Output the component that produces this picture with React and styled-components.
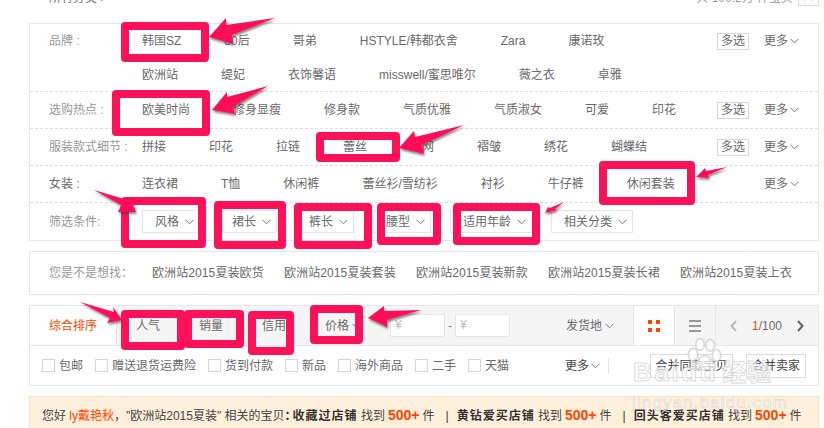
import React from 'react';
import styled, { createGlobalStyle } from 'styled-components';

const Global = createGlobalStyle`
  html, body { margin: 0; padding: 0; background: #fff; }
  body { width: 824px; height: 428px; overflow: hidden; font: 12px/16px "Liberation Sans", "Noto Sans CJK SC", sans-serif; color: #6a6a6a; }
  * { box-sizing: border-box; }
`;

const Page = styled.div`position: relative; width: 824px; height: 428px; overflow: hidden; padding-left: 29px;`;
const TopBar = styled.div`display: flex; justify-content: space-between; align-items: flex-start; width: 790px; height: 23px; color: #777;`;
const Crumb = styled.span`margin: -10px 0 0 20px;`;
const TopRight = styled.div`display: flex; gap: 5px; margin-top: -10px; color: #999;`;
const PageBox = styled.span`width: 21px; height: 16px; border: 1px solid #ddd; text-align: center; color: #666;`;

const Panel = styled.section`width: 790px; border: 1px solid #e6e6e6;`;
const Row = styled.div`display: flex; align-items: ${p => p.$tall ? 'flex-start' : 'center'}; height: ${p => p.$h}px; padding: 0 21px 0 19px; border-bottom: ${p => p.$last ? 'none' : '1px dashed #ddd'};`;
const Label = styled.div`flex: 0 0 93px; color: ${p => p.$dark ? '#6a6a6a' : '#999'}; white-space: nowrap; line-height: ${p => p.$tall ? '34px' : '16px'};`;
const Lines = styled.div`flex: 1; display: flex; flex-direction: column;`;
const Line = styled.div`display: flex; align-items: center; gap: 43px; height: ${p => p.$h ? `${p.$h}px` : 'auto'}; flex: ${p => p.$h ? 'none' : 1}; white-space: nowrap;`;
const Actions = styled.div`display: flex; align-items: center; justify-content: flex-end; flex: 0 0 80px; height: ${p => p.$tall ? '34px' : 'auto'};`;
const Multi = styled.span`width: 32px; height: 17px; border: 1px solid #d8d8d8; text-align: center; line-height: 15px;`;
const More = styled.span`display: flex; align-items: center; gap: 2px; margin-left: 15px; width: 33px; white-space: nowrap;`;
const Chev = styled.svg`width: 9px; height: 6px; flex: none; fill: none; stroke: ${p => p.$c || '#777'}; stroke-width: 1;`;
const Chevron = ({ c }) => <Chev $c={c} viewBox="0 0 9 6"><polyline points="0.5,0.8 4.5,4.8 8.5,0.8" /></Chev>;

const Dropdowns = styled.div`display: flex; align-items: center; flex: 1;`;
const Drop = styled.div`display: flex; align-items: center; height: 23px; width: ${p => p.$w}px; margin-right: ${p => p.$after}px; padding-left: ${p => p.$pad}px; border: 1px solid #e6e6e6; gap: 6px; white-space: nowrap;`;

const SuggestPanel = styled(Panel)`display: flex; align-items: center; height: 44px; margin-top: 10px; padding-left: 19px;`;
const Suggest = styled.div`flex: 0 0 103px; color: #999; white-space: nowrap;`;
const SuggestList = styled.div`display: flex; gap: 20px; white-space: nowrap;`;
const SuggestItem = styled.span`width: 112px; letter-spacing: 0.1px;`;

const SortPanel = styled(Panel)`margin-top: 10px; height: 81px;`;
const Toolbar = styled.div`display: flex; align-items: center; height: 40px; background: #f5f5f5; border-bottom: 1px solid #e6e6e6;`;
const Tab = styled.div`display: flex; align-items: center; width: 87px; height: 39px; padding: 1px 0 0 19px; background: #fff; border-right: 1px solid #e6e6e6; color: #f40;`;
const Sort = styled.div`display: flex; align-items: center; gap: 3px; width: ${p => p.$w || 63}px; padding: 1px 0 0 19px;`;
const PriceBox = styled.div`width: 55px; height: 23px; background: #fff; border: 1px solid #e6e6e6; padding-left: 4px; line-height: 21px; color: #bbb;`;
const Dash = styled.span`width: 10px; text-align: center; color: #888;`;
const ShipFrom = styled.div`display: flex; align-items: center; gap: 3px; margin-left: 56px; padding-top: 1px;`;
const Views = styled.div`display: flex; align-items: center; margin-left: auto; height: 39px;`;
const ViewBtn = styled.div`display: flex; align-items: center; justify-content: center; width: 41px; height: 39px; background: ${p => p.$on ? '#fff' : 'transparent'}; border-left: 1px solid #e6e6e6;`;
const Pager = styled.div`display: flex; align-items: center; width: 103px; height: 39px; border-left: 1px solid #e6e6e6; padding-left: 14px; gap: 15px;`;
const Cur = styled.span`color: #f40;`;
const PagerNum = styled.span`width: 30px; white-space: nowrap;`;

const Filters = styled.div`display: flex; align-items: center; height: 39px; padding: 0 12px; white-space: nowrap;`;
const Check = styled.label`display: flex; align-items: center; gap: 4px; margin-right: 12px;`;
const Box = styled.span`width: 13px; height: 13px; background: #fff; border: 1px solid #d5d5d5;`;
const FilterRight = styled.div`display: flex; align-items: center; margin-left: auto; gap: 13px;`;
const Sep = styled.span`width: 1px; height: 16px; background: #e6e6e6; margin: 0 28px 0 0;`;
const MoreFilter = styled(More)`margin-left: 44px; color: #444;`;
const MergeBtn = styled.span`height: 24px; line-height: 22px; width: ${p => p.$w}px; text-align: center; background: #fff; border: 1px solid #ddd; color: #444;`;

const Notice = styled.div`width: 790px; height: 34px; margin-top: 10px; padding-left: 12px; background: #fff0dc; border: 1px solid #f6e2c3; border-bottom: none; line-height: 36px; color: #444; white-space: nowrap;`;
const Orange = styled.span`color: #f40;`;
const Strong = styled.b`color: #333; letter-spacing: 1px;`;
const Colon = styled.b`color: #333; margin-right: -4px;`;
const Count = styled.b`color: #f40; font-size: 14px; margin: 0 3px;`;
const Bar = styled.span`margin: 0 8px 0 11px; color: #333;`;

const Callout = styled.div`position: absolute; left: ${p => p.$x}px; top: ${p => p.$y}px; width: ${p => p.$w}px; height: ${p => p.$h}px; border: 8px solid #ff1159; border-radius: 4px;`;
const Arrows = styled.svg`position: absolute; left: 0; top: 0; width: 824px; height: 428px; pointer-events: none;`;
const Mark = styled.div`position: absolute; left: 628px; top: 338px; width: 160px; height: 76px; pointer-events: none;`;
const MarkLogo = styled.div`position: absolute; left: 5px; top: 20px; display: flex; align-items: baseline; font-size: 26px; line-height: 28px; font-weight: 700; letter-spacing: 2.6px; color: rgba(255,255,255,.7); -webkit-text-stroke: 1px rgba(200,200,200,.65); white-space: nowrap;`;
const MarkCn = styled.span`font-size: 24px; letter-spacing: 1px; margin-left: 4px;`;
const MarkUrl = styled.div`position: absolute; left: 4px; top: 55px; font-size: 17px; line-height: 20px; letter-spacing: 1.1px; color: rgba(255,255,255,.6); -webkit-text-stroke: 0.7px rgba(205,205,205,.65); white-space: nowrap;`;
const Paw = styled.svg`position: absolute; left: 58px; top: 0; width: 36px; height: 38px;`;

const brand = [['韩国SZ', '80后', '哥弟', 'HSTYLE/韩都衣舍', 'Zara', '康诺玫'], ['欧洲站', '缇妃', '衣饰馨语', 'misswell/蜜思唯尔', '薇之衣', '卓雅']];
const hot = ['欧美时尚', '修身显瘦', '修身款', '气质优雅', '气质淑女', '可爱', '印花'];
const detail = ['拼接', '印花', '拉链', '蕾丝', '渔网', '褶皱', '绣花', '蝴蝶结'];
const women = ['连衣裙', 'T恤', '休闲裤', '蕾丝衫/雪纺衫', '衬衫', '牛仔裤', '休闲套装'];
const drops = [
  ['风格', 58, 22, 12], ['裙长', 55, 22, 9], ['裤长', 55, 19, 9],
  ['腰型', 58, 19, 12], ['适用年龄', 83, 18, 12], ['相关分类', 82, 0, 12],
];
const suggests = ['欧洲站2015夏装欧货', '欧洲站2015夏装套装', '欧洲站2015夏装新款', '欧洲站2015夏装长裙', '欧洲站2015夏装上衣'];
const checks = ['包邮', '赠送退货运费险', '货到付款', '新品', '海外商品', '二手', '天猫'];
const callouts = [
  [121, 22, 88, 40], [112, 90, 98, 46], [316, 132, 84, 30], [599, 161, 96, 44],
  [121, 197, 85, 51], [214, 201, 72, 48], [294, 203, 78, 46], [377, 203, 64, 42], [453, 203, 87, 42],
  [121, 310, 64, 40], [184, 310, 60, 38], [248, 311, 46, 44], [310, 305, 53, 39],
];
const arrows = [
  '209,37 226,18 226,25 275,18 232,35 233,44',
  '212,110 227,92 227,97 268,86 233,107 235,114',
  '399,148 414,131 415,137 464,125 422,145 424,154',
  '696,177 705,168 706,171 727,167 708,175 709,178',
  '94,190 124,199 130,197 136,212 118,212 121,205',
  '545,213 548,207 550,208 564,202 555,209 557,210',
  '80,302 114,312 113,307 122,320 107,323 110,318',
  '368,318 384,306 384,311 421,310 387,320 387,327',
];

export default function App() {
  return (
    <Page>
      <Global />
      <TopBar>
        <Crumb>所有分类 &gt;</Crumb>
        <TopRight><span>共 100.2万 件宝贝</span><PageBox>· ·</PageBox></TopRight>
      </TopBar>

      <Panel>
        <Row $h={68} $tall>
          <Label $tall>品牌 :</Label>
          <Lines>
            {brand.map((l, i) => <Line key={i} $h={34}>{l.map(t => <span key={t}>{t}</span>)}</Line>)}
          </Lines>
          <Actions $tall><Multi>多选</Multi><More>更多<Chevron /></More></Actions>
        </Row>
        <Row $h={37}>
          <Label>选购热点 :</Label>
          <Line>{hot.map(t => <span key={t}>{t}</span>)}</Line>
          <Actions><Multi>多选</Multi><More>更多<Chevron /></More></Actions>
        </Row>
        <Row $h={37}>
          <Label>服装款式细节 :</Label>
          <Line>{detail.map(t => <span key={t}>{t}</span>)}</Line>
          <Actions><Multi>多选</Multi><More>更多<Chevron /></More></Actions>
        </Row>
        <Row $h={37}>
          <Label $dark>女装 :</Label>
          <Line>{women.map(t => <span key={t}>{t}</span>)}</Line>
          <Actions><More>更多<Chevron /></More></Actions>
        </Row>
        <Row $h={37} $last>
          <Label>筛选条件:</Label>
          <Dropdowns>
            {drops.map(([t, w, a, p]) => <Drop key={t} $w={w} $after={a} $pad={p}>{t}<Chevron /></Drop>)}
          </Dropdowns>
        </Row>
      </Panel>

      <SuggestPanel>
        <Suggest>您是不是想找：</Suggest>
        <SuggestList>{suggests.map(t => <SuggestItem key={t}>{t}</SuggestItem>)}</SuggestList>
      </SuggestPanel>

      <SortPanel>
        <Toolbar>
          <Tab>综合排序</Tab>
          <Sort>人气</Sort>
          <Sort>销量</Sort>
          <Sort>信用</Sort>
          <Sort $w={84}>价格<Chevron /></Sort>
          <PriceBox>¥</PriceBox>
          <Dash>-</Dash>
          <PriceBox>¥</PriceBox>
          <ShipFrom>发货地<Chevron /></ShipFrom>
          <Views>
            <ViewBtn $on>
              <svg width="12" height="12" viewBox="0 0 12 12" fill="#f40">
                <rect width="4" height="4" /><rect x="8" width="4" height="4" />
                <rect y="8" width="4" height="4" /><rect x="8" y="8" width="4" height="4" />
              </svg>
            </ViewBtn>
            <ViewBtn>
              <svg width="12" height="12" viewBox="0 0 12 12" fill="#999">
                <rect width="12" height="2" /><rect y="5" width="12" height="2" /><rect y="10" width="12" height="2" />
              </svg>
            </ViewBtn>
            <Pager>
              <svg width="7" height="12" viewBox="0 0 7 12" fill="none" stroke="#bbb" strokeWidth="2"><polyline points="6,1 1.5,6 6,11" /></svg>
              <PagerNum><Cur>1</Cur>/100</PagerNum>
              <svg width="7" height="12" viewBox="0 0 7 12" fill="none" stroke="#666" strokeWidth="2"><polyline points="1,1 5.5,6 1,11" /></svg>
            </Pager>
          </Views>
        </Toolbar>
        <Filters>
          {checks.map(t => <Check key={t}><Box />{t}</Check>)}
          <MoreFilter>更多<Chevron /></MoreFilter>
          <FilterRight>
            <Sep />
            <MergeBtn $w={83}>合并同款宝贝</MergeBtn>
            <MergeBtn $w={60}>合并卖家</MergeBtn>
          </FilterRight>
        </Filters>
      </SortPanel>

      <Notice>
        您好 <Orange>ly戴艳秋</Orange>，"欧洲站2015夏装" 相关的宝贝<Colon>：</Colon><Strong>收藏过店铺</Strong> 找到<Count>500+</Count>件<Bar>|</Bar><Strong>黄钻爱买店铺</Strong> 找到<Count>500+</Count>件<Bar>|</Bar><Strong>回头客爱买店铺</Strong> 找到<Count>500+</Count>件
      </Notice>

      <Mark>
        <Paw viewBox="0 0 46 48" fill="rgba(255,255,255,.7)" stroke="rgba(200,200,200,.7)" strokeWidth="2">
          <ellipse cx="9" cy="21" rx="6" ry="8" />
          <ellipse cx="18" cy="8" rx="5.5" ry="7.5" />
          <ellipse cx="31" cy="9" rx="5.5" ry="7.5" />
          <ellipse cx="39" cy="22" rx="5.5" ry="7.5" />
          <path d="M24 22c6 0 9 6 12 10 3 5 0 10-6 9-3-1-8-1-11 0-6 1-9-5-6-9 3-4 5-10 11-10z" />
        </Paw>
        <MarkLogo>Baidu<MarkCn>经验</MarkCn></MarkLogo>
        <MarkUrl>jingyan.baidu.com</MarkUrl>
      </Mark>

      {callouts.map(([x, y, w, h]) => <Callout key={`${x}-${y}`} $x={x} $y={y} $w={w} $h={h} />)}
      <Arrows viewBox="0 0 824 428">
        <defs>
          <filter id="arrowShadow" x="-20%" y="-40%" width="150%" height="200%">
            <feDropShadow dx="1" dy="2" stdDeviation="1.2" floodColor="#333" floodOpacity="0.6" />
          </filter>
        </defs>
        {arrows.map(p => <polygon key={p} points={p} fill="#ff1159" filter="url(#arrowShadow)" />)}
      </Arrows>
    </Page>
  );
}
